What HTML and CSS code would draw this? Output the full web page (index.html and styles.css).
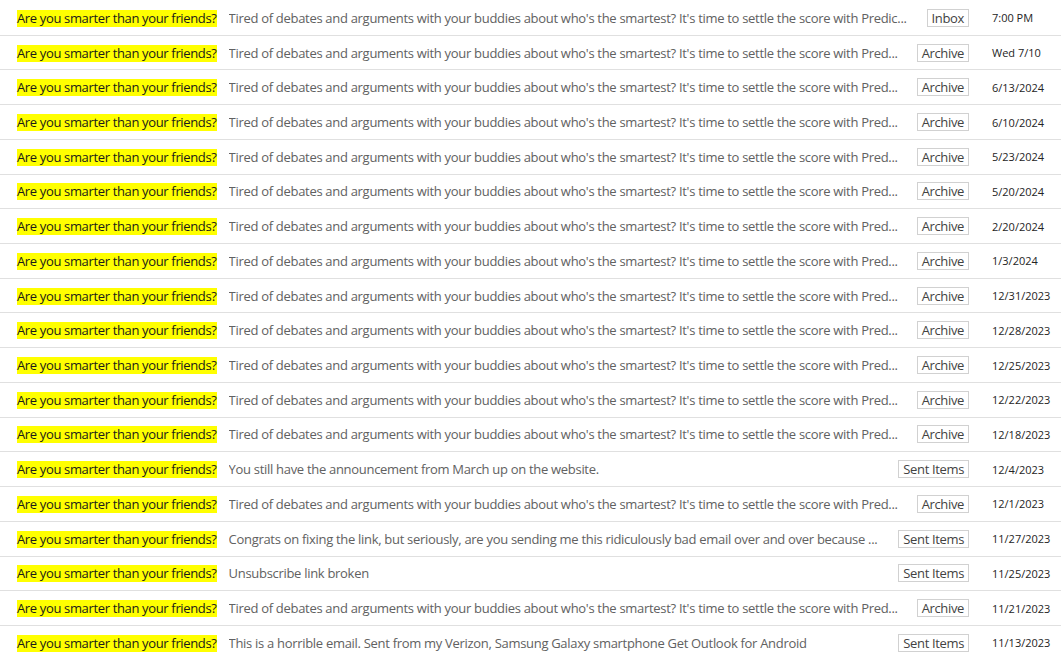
FILE: index.html
```html
<!DOCTYPE html>
<html lang="en">

<head>
    <meta charset="UTF-8">
    <title>Search results</title>
    <link rel="stylesheet" href="styles.css">
</head>

<body>
    <ul class="mail-list">
        <li class="mail">
            <span class="subject"><mark>Are you smarter than your friends?</mark></span>
            <span class="preview">Tired of debates and arguments with your buddies about who's the smartest? It's time to settle the score with Predic...</span>
            <span class="folder">Inbox</span>
            <span class="date">7:00 PM</span>
        </li>
        <li class="mail">
            <span class="subject"><mark>Are you smarter than your friends?</mark></span>
            <span class="preview">Tired of debates and arguments with your buddies about who's the smartest? It's time to settle the score with Pred...</span>
            <span class="folder">Archive</span>
            <span class="date">Wed 7/10</span>
        </li>
        <li class="mail">
            <span class="subject"><mark>Are you smarter than your friends?</mark></span>
            <span class="preview">Tired of debates and arguments with your buddies about who's the smartest? It's time to settle the score with Pred...</span>
            <span class="folder">Archive</span>
            <span class="date">6/13/2024</span>
        </li>
        <li class="mail">
            <span class="subject"><mark>Are you smarter than your friends?</mark></span>
            <span class="preview">Tired of debates and arguments with your buddies about who's the smartest? It's time to settle the score with Pred...</span>
            <span class="folder">Archive</span>
            <span class="date">6/10/2024</span>
        </li>
        <li class="mail">
            <span class="subject"><mark>Are you smarter than your friends?</mark></span>
            <span class="preview">Tired of debates and arguments with your buddies about who's the smartest? It's time to settle the score with Pred...</span>
            <span class="folder">Archive</span>
            <span class="date">5/23/2024</span>
        </li>
        <li class="mail">
            <span class="subject"><mark>Are you smarter than your friends?</mark></span>
            <span class="preview">Tired of debates and arguments with your buddies about who's the smartest? It's time to settle the score with Pred...</span>
            <span class="folder">Archive</span>
            <span class="date">5/20/2024</span>
        </li>
        <li class="mail">
            <span class="subject"><mark>Are you smarter than your friends?</mark></span>
            <span class="preview">Tired of debates and arguments with your buddies about who's the smartest? It's time to settle the score with Pred...</span>
            <span class="folder">Archive</span>
            <span class="date">2/20/2024</span>
        </li>
        <li class="mail">
            <span class="subject"><mark>Are you smarter than your friends?</mark></span>
            <span class="preview">Tired of debates and arguments with your buddies about who's the smartest? It's time to settle the score with Pred...</span>
            <span class="folder">Archive</span>
            <span class="date">1/3/2024</span>
        </li>
        <li class="mail">
            <span class="subject"><mark>Are you smarter than your friends?</mark></span>
            <span class="preview">Tired of debates and arguments with your buddies about who's the smartest? It's time to settle the score with Pred...</span>
            <span class="folder">Archive</span>
            <span class="date">12/31/2023</span>
        </li>
        <li class="mail">
            <span class="subject"><mark>Are you smarter than your friends?</mark></span>
            <span class="preview">Tired of debates and arguments with your buddies about who's the smartest? It's time to settle the score with Pred...</span>
            <span class="folder">Archive</span>
            <span class="date">12/28/2023</span>
        </li>
        <li class="mail">
            <span class="subject"><mark>Are you smarter than your friends?</mark></span>
            <span class="preview">Tired of debates and arguments with your buddies about who's the smartest? It's time to settle the score with Pred...</span>
            <span class="folder">Archive</span>
            <span class="date">12/25/2023</span>
        </li>
        <li class="mail">
            <span class="subject"><mark>Are you smarter than your friends?</mark></span>
            <span class="preview">Tired of debates and arguments with your buddies about who's the smartest? It's time to settle the score with Pred...</span>
            <span class="folder">Archive</span>
            <span class="date">12/22/2023</span>
        </li>
        <li class="mail">
            <span class="subject"><mark>Are you smarter than your friends?</mark></span>
            <span class="preview">Tired of debates and arguments with your buddies about who's the smartest? It's time to settle the score with Pred...</span>
            <span class="folder">Archive</span>
            <span class="date">12/18/2023</span>
        </li>
        <li class="mail">
            <span class="subject"><mark>Are you smarter than your friends?</mark></span>
            <span class="preview">You still have the announcement from March up on the website.</span>
            <span class="folder">Sent Items</span>
            <span class="date">12/4/2023</span>
        </li>
        <li class="mail">
            <span class="subject"><mark>Are you smarter than your friends?</mark></span>
            <span class="preview">Tired of debates and arguments with your buddies about who's the smartest? It's time to settle the score with Pred...</span>
            <span class="folder">Archive</span>
            <span class="date">12/1/2023</span>
        </li>
        <li class="mail">
            <span class="subject"><mark>Are you smarter than your friends?</mark></span>
            <span class="preview">Congrats on fixing the link, but seriously, are you sending me this ridiculously bad email over and over because ...</span>
            <span class="folder">Sent Items</span>
            <span class="date">11/27/2023</span>
        </li>
        <li class="mail">
            <span class="subject"><mark>Are you smarter than your friends?</mark></span>
            <span class="preview">Unsubscribe link broken</span>
            <span class="folder">Sent Items</span>
            <span class="date">11/25/2023</span>
        </li>
        <li class="mail">
            <span class="subject"><mark>Are you smarter than your friends?</mark></span>
            <span class="preview">Tired of debates and arguments with your buddies about who's the smartest? It's time to settle the score with Pred...</span>
            <span class="folder">Archive</span>
            <span class="date">11/21/2023</span>
        </li>
        <li class="mail">
            <span class="subject"><mark>Are you smarter than your friends?</mark></span>
            <span class="preview">This is a horrible email. Sent from my Verizon, Samsung Galaxy smartphone Get Outlook for Android</span>
            <span class="folder">Sent Items</span>
            <span class="date">11/13/2023</span>
        </li>
    </ul>
</body>

</html>
```

FILE: styles.css
```css
* {
    padding: 0;
    margin: 0;
    box-sizing: border-box;
}

body {
    background: #fff;
    font-family: "Open Sans", "Noto Sans", sans-serif;
    font-size: 13px;
    letter-spacing: -0.35px;
    color: #242424;
    overflow: hidden;
}

.mail-list {
    list-style: none;
    padding-top: 1px;
}

.mail {
    display: flex;
    align-items: center;
    height: 34.72px;
    padding-left: 17px;
    border-bottom: 1px solid #e0e0e0;
    white-space: nowrap;
}

.subject {
    flex: none;
}

.subject mark {
    display: inline-block;
    background: #ffff00;
    color: #1a1a1a;
    height: 17px;
    line-height: 17px;
}

.preview {
    flex: 1;
    min-width: 0;
    margin-left: 12px;
    margin-right: 12px;
    overflow: hidden;
    text-overflow: ellipsis;
    letter-spacing: -0.3px;
    color: #616161;
}

.folder {
    flex: none;
    border: 1px solid #d1d1d1;
    color: #424242;
    height: 18px;
    line-height: 16px;
    padding: 0 4px;
}

.date {
    flex: none;
    width: 69px;
    margin-left: 23px;
    font-size: 11px;
    letter-spacing: 0;
    color: #242424;
}
```
